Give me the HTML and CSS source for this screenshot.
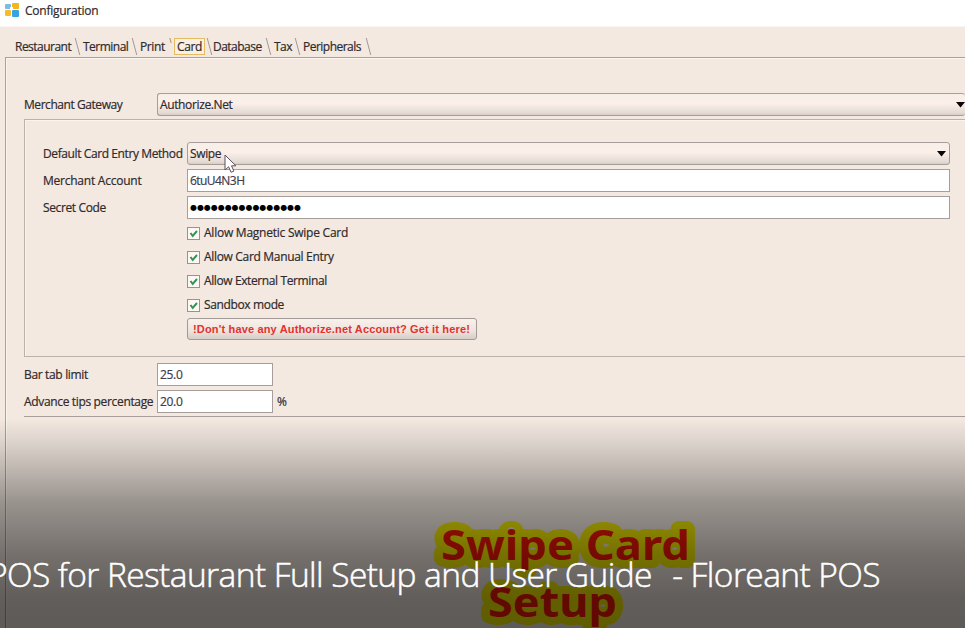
FILE: index.html
```html
<!DOCTYPE html>
<html lang="en">
<head>
<meta charset="utf-8">
<title>Configuration</title>
<link rel="stylesheet" href="styles.css">
</head>
<body>
<div class="window">
  <header class="titlebar">
    <svg class="logo" width="15" height="15" viewBox="0 0 15 15"><rect x="0" y="1" width="6" height="5" rx="1" fill="#79bce6"/><rect x="7" y="0" width="7" height="6" rx="1" fill="#f5b51c"/><rect x="0" y="7" width="6" height="6" rx="1" fill="#f7bd28"/><rect x="7" y="7" width="7" height="7" rx="1" fill="#37a5e5"/><path d="M5 4h3v2H5z" fill="#fff"/></svg>
    <span class="title">Configuration</span>
  </header>
  <nav class="tabs">
    <span class="tab restaurant">Restaurant</span><i class="slash"></i>
    <span class="tab terminal">Terminal</span><i class="slash"></i>
    <span class="tab print">Print</span><i class="slash short"></i>
    <span class="tab card">Card</span><i class="slash tight"></i>
    <span class="tab database">Database</span><i class="slash"></i>
    <span class="tab tax">Tax</span><i class="slash"></i>
    <span class="tab peripherals">Peripherals</span><i class="slash"></i>
  </nav>
  <main class="pane">
    <div class="row gateway">
      <span class="label l-gateway">Merchant Gateway</span>
      <div class="combo"><span class="v-auth">Authorize.Net</span><svg class="arrow" width="9" height="6"><path d="M0 0h9L4.500 5.500z"/></svg></div>
    </div>
    <section class="group">
      <div class="row"><span class="label l-method">Default Card Entry Method</span><div class="combo"><span class="v-swipe">Swipe</span><svg class="arrow" width="9" height="6"><path d="M0 0h9L4.500 5.500z"/></svg></div></div>
      <div class="row"><span class="label l-account">Merchant Account</span><div class="field"><span class="v-account">6tuU4N3H</span></div></div>
      <div class="row"><span class="label l-secret">Secret Code</span><div class="field"><span class="dots">●●●●●●●●●●●●●●●●</span></div></div>
      <div class="checks">
        <div class="check"><svg class="box" width="13" height="13"><rect x=".5" y=".5" width="12" height="12"/><path d="M3.500 6l2.200 3L10 4"/></svg><span class="c1">Allow Magnetic Swipe Card</span></div>
        <div class="check"><svg class="box" width="13" height="13"><rect x=".5" y=".5" width="12" height="12"/><path d="M3.500 6l2.200 3L10 4"/></svg><span class="c2">Allow Card Manual Entry</span></div>
        <div class="check"><svg class="box" width="13" height="13"><rect x=".5" y=".5" width="12" height="12"/><path d="M3.500 6l2.200 3L10 4"/></svg><span class="c3">Allow External Terminal</span></div>
        <div class="check"><svg class="box" width="13" height="13"><rect x=".5" y=".5" width="12" height="12"/><path d="M3.500 6l2.200 3L10 4"/></svg><span class="c4">Sandbox mode</span></div>
      </div>
      <div class="signup"><span>!Don't have any Authorize.net Account? Get it here!</span></div>
    </section>
    <div class="row small"><span class="label l-bar">Bar tab limit</span><div class="field"><span>25.0</span></div></div>
    <div class="row small"><span class="label l-tips">Advance tips percentage</span><div class="field"><span>20.0</span></div><span class="percent">%</span></div>
    <div class="rule"></div>
  </main>
  <svg class="pointer" width="13" height="20" viewBox="0 0 13 20"><path d="M1 1v15l3.600-3.200 2.500 5.500 2.800-1.200-2.400-5.300h4.400z" fill="#fff" stroke="#5c5058"/></svg>
  <svg class="banner" width="300" height="118">
    <text x="25" y="49" textLength="249" lengthAdjust="spacingAndGlyphs">Swipe Card</text>
    <text x="72" y="106" textLength="129" lengthAdjust="spacingAndGlyphs">Setup</text>
  </svg>
  <div class="shade"></div>
  <div class="caption">POS for Restaurant Full Setup and User Guide<span class="gap">&nbsp; </span>- Floreant POS</div>
</div>
</body>
</html>
```
FILE: styles.css
```css
* { box-sizing: border-box; }
body { margin: 0; font: 12px/16px "Open Sans", "Noto Sans", sans-serif; color: #30292b; -webkit-text-stroke: .2px; }
.window { position: relative; width: 965px; height: 628px; overflow: hidden; background: #f3e9e1; white-space: nowrap; }
.titlebar { display: flex; height: 27px; padding: 3px 5px; background: #fff; border-bottom: 1px solid #f8f4f2; }
.title { margin-left: 5px; letter-spacing: -.25px; }
.tabs { display: flex; height: 30px; padding: 11px 0 0 15px; letter-spacing: -.52px; }
.tab { height: 17px; line-height: 17px; flex: none; }
.slash { width: 12px; height: 18px; flex: none; }
.slash::before { content: ""; display: block; width: 1px; height: 17px; margin-left: 6px; background: #a3979a; transform: skewX(15deg); }
.slash.short { width: 7px; }
.slash.short::before { height: 5px; margin-left: 3px; background: #b98f68; }
.slash.tight { width: 8px; }
.slash.tight::before { margin-left: 4px; }
.restaurant { width: 56px; }
.terminal { width: 45px; }
.print { width: 27px; letter-spacing: -.4px; }
.card { width: 31px; padding-left: 2px; background: #fbefe2; border: 1px solid #e4bd62; line-height: 15px; letter-spacing: -.4px; }
.database { width: 49px; }
.tax { width: 17px; }
.peripherals { width: 59px; }
.pane { height: 571px; margin-left: 5px; padding: 35px 0 0 18px; border: 1px solid #aaa09c; border-width: 1px 0 0 1px; box-shadow: inset 1px 1px #fcf5ef; }
.row { display: flex; align-items: center; height: 23px; margin-bottom: 4px; }
.row.gateway { margin-bottom: 3px; }
.label { flex: none; }
.gateway .label, .small .label { width: 133px; }
.gateway .combo { border-right: 0; padding-right: 0; }
.l-gateway { letter-spacing: -.44px; }
.l-method { letter-spacing: -.4px; }
.l-account { letter-spacing: -.24px; }
.l-secret, .v-auth, .v-swipe { letter-spacing: -.37px; }
.v-account { letter-spacing: -.55px; }
.l-bar, .l-tips { letter-spacing: -.34px; }
.combo, .field { display: flex; align-items: center; flex: 1; height: 23px; padding: 0 3px 0 2px; border: 1px solid #a79e9c; }
.combo { justify-content: space-between; border-radius: 3px; background: linear-gradient(#f8efe9, #fbefe9 45%, #e4dbd6 90%, #d6cbc4); }
.field { background: #fff; color: #433b4b; }
.arrow { fill: #090607; }
.group { height: 238px; margin: 0; padding: 22px 15px 0 18px; border: 1px solid #bab1ac; border-right: 0; box-shadow: inset 1px 1px #fbf4ed; }
.group .label { width: 144px; }
.dots { font: 7.900px/16px "DejaVu Sans", sans-serif; color: #000; letter-spacing: .05px; -webkit-text-stroke: 0; }
.checks { margin: -2px 0 0 144px; }
.check { display: flex; align-items: center; height: 24px; }
.c1 { letter-spacing: -.24px; }
.c2 { letter-spacing: -.32px; }
.c3 { letter-spacing: -.39px; }
.c4 { letter-spacing: -.36px; }
.box { flex: none; margin-right: 4px; }
.box rect { fill: #fdf8f3; stroke: #9b928f; }
.box path { fill: none; stroke: #38905a; stroke-width: 2; }
.signup { width: 290px; height: 22px; margin: 1px 0 0 144px; padding-left: 5px; border: 1px solid #a29a96; border-radius: 3px; background: linear-gradient(#faf1ec, #eee4de 60%, #d5cdc7); font: bold 11px/20px "Liberation Sans", sans-serif; color: #e3312f; letter-spacing: .16px; -webkit-text-stroke: 0; }
.small .field { flex: 0 0 116px; letter-spacing: -.3px; }
.group + .small { margin-top: 6px; }
.percent { margin-left: 4px; }
.rule { margin-top: -1px; border-top: 1px solid #a79e99; }
.pointer { position: absolute; left: 224px; top: 154px; }
.banner { position: absolute; left: 416px; top: 511px; }
.banner text { font: bold 42px "Noto Sans", sans-serif; fill: #f61606; stroke: #f5ec00; stroke-width: 16px; stroke-linejoin: round; paint-order: stroke; }
.shade { position: absolute; left: 0; top: 418px; width: 965px; height: 210px; background: linear-gradient(rgba(0,0,0,0), rgba(0,0,0,.1) 12%, rgba(0,0,0,.37) 40%, rgba(0,0,0,.52) 65%, rgba(0,0,0,.6) 86%, rgba(0,0,0,.61)); }
.caption { position: absolute; right: 85px; top: 551px; font: 300 33.500px/46px "Open Sans", "Noto Sans", sans-serif; color: #fff; letter-spacing: -.58px; -webkit-text-stroke: .5px #fff; }
.gap { letter-spacing: 1.500px; }
```
